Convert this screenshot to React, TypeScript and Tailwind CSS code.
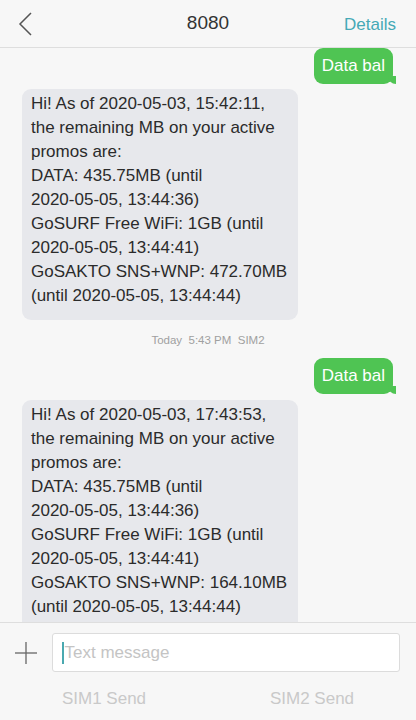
import React from "react";

const FONT = { fontFamily: "'Liberation Sans', Arial, sans-serif" };

const first = [
  "Hi! As of 2020-05-03, 15:42:11,",
  "the remaining MB on your active",
  "promos are:",
  "DATA: 435.75MB (until",
  "2020-05-05, 13:44:36)",
  "GoSURF Free WiFi: 1GB (until",
  "2020-05-05, 13:44:41)",
  "GoSAKTO SNS+WNP: 472.70MB",
  "(until 2020-05-05, 13:44:44)",
];

const second = [
  "Hi! As of 2020-05-03, 17:43:53,",
  "the remaining MB on your active",
  "promos are:",
  "DATA: 435.75MB (until",
  "2020-05-05, 13:44:36)",
  "GoSURF Free WiFi: 1GB (until",
  "2020-05-05, 13:44:41)",
  "GoSAKTO SNS+WNP: 164.10MB",
  "(until 2020-05-05, 13:44:44)",
];

function Sent({ text }: { text: string }) {
  return (
    <div className="flex justify-end pr-[23px]">
      <div className="relative h-[36px] rounded-[9px] bg-[#4fc453] px-[8px] text-[17px] leading-[36px] text-white">
        {text}
        {/* little tail */}
        <div className="absolute -right-[3px] bottom-0 h-[8px] w-[8px] rounded-bl-[8px] bg-[#4fc453]" />
      </div>
    </div>
  );
}

function Received({ lines }: { lines: string[] }) {
  return (
    <div className="pl-[22px]">
      <div className="w-[276px] rounded-[9px] bg-[#e7e8ec] pb-[12px] pl-[9px] pt-[3px] text-[17px] leading-[24px] text-[#2b2b2b]">
        {lines.map((l, i) => (
          <div key={i} className="whitespace-nowrap">
            {l}
          </div>
        ))}
      </div>
    </div>
  );
}

export default function App() {
  return (
    <div className="flex h-[720px] w-[416px] flex-col overflow-hidden bg-[#f7f7f7]" style={FONT}>
      {/* Header */}
      <div className="relative flex h-[48px] shrink-0 items-center justify-center border-b border-[#dedede]">
        <svg
          className="absolute left-[17px] top-[12px]"
          width="16"
          height="24"
          viewBox="0 0 16 24"
          fill="none"
          stroke="#555"
          strokeWidth="1.5"
        >
          <polyline points="14,1 3,12 14,23" />
        </svg>
        <div className="text-[19px] text-[#333]">8080</div>
        <div className="absolute right-[20px] top-[12px] text-[17px] text-[#45a9b6]">Details</div>
      </div>

      {/* Messages */}
      <div className="flex flex-1 flex-col overflow-hidden">
        <Sent text="Data bal" />
        <div className="mt-[5px]">
          <Received lines={first} />
        </div>
        <div className="mt-[13px] text-center text-[11.5px] leading-[14px] text-[#a0a0a0]">
          Today&nbsp;&nbsp;5:43 PM&nbsp;&nbsp;SIM2
        </div>
        <div className="mt-[11px]">
          <Sent text="Data bal" />
        </div>
        <div className="mt-[6px]">
          <Received lines={second} />
        </div>
      </div>

      {/* Composer */}
      <div className="h-[98px] shrink-0 border-t border-[#dedede] bg-[#f7f7f7]">
        <div className="flex items-center pt-[10px]">
          <div className="flex w-[52px] justify-center">
            <svg width="24" height="24" viewBox="0 0 24 24" stroke="#666" strokeWidth="1.3">
              <line x1="12" y1="1" x2="12" y2="23" />
              <line x1="1" y1="12" x2="23" y2="12" />
            </svg>
          </div>
          <div className="flex h-[39px] w-[348px] items-center rounded-[3px] border border-[#dcdcdc] bg-white pl-[9px]">
            <div className="h-[22px] w-[1.5px] bg-[#4aa9b0]" />
            <span className="pl-[1px] text-[17px] text-[#c4c4c4]">Text message</span>
          </div>
        </div>
        <div className="mt-[14px] grid grid-cols-2 text-center text-[17px] text-[#c9c9c9]">
          <div>SIM1 Send</div>
          <div>SIM2 Send</div>
        </div>
      </div>
    </div>
  );
}
